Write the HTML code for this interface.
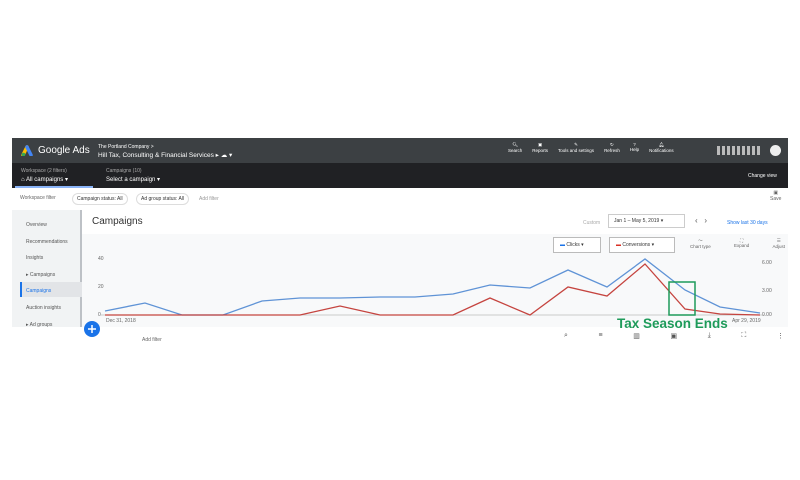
<!DOCTYPE html><html><head><style>
body{margin:0;width:800px;height:480px;background:#fff;font-family:"Liberation Sans",sans-serif;position:relative;overflow:hidden}
.a{position:absolute}
.t{font-size:5px;color:#fff}
.g{color:#666;font-size:5px}
</style></head><body>
<div class="a" style="left:12px;top:138px;width:776px;height:204px;overflow:hidden;background:#fff">
<div class="a" style="left:0;top:0;width:776px;height:25px;background:#3c4043"></div>
<svg class="a" style="left:9px;top:7px" width="12" height="11"><path d="M2 10 L6 2" stroke="#fbbc04" stroke-width="3.5" stroke-linecap="round"/><path d="M6 2 L10 10" stroke="#4285f4" stroke-width="3.5" stroke-linecap="round"/><circle cx="2.5" cy="9.5" r="1.8" fill="#34a853"/></svg>
<div class="a" style="left:26px;top:7px;font-size:10px;color:#fff">Google Ads</div>
<div class="a t" style="left:86px;top:6px">The Portland Company &gt;</div>
<div class="a" style="left:86px;top:13px;font-size:6.5px;color:#fff">Hill Tax, Consulting &amp; Financial Services ▸ ☁ ▾</div>
<div class="a t" style="left:496px;top:4px;width:240px;display:flex;gap:10px;text-align:center;font-size:4.5px">
<span>🔍︎<br>Search</span><span>▣<br>Reports</span><span>✎<br>Tools and settings</span><span>↻<br>Refresh</span><span>?<br>Help</span><span>🔔︎<br>Notifications</span></div>
<div class="a" style="left:705px;top:8px;width:45px;height:9px;background:repeating-linear-gradient(90deg,#bbb 0 3px,#3c4043 3px 5px)"></div>
<div class="a" style="left:758px;top:7px;width:11px;height:11px;border-radius:50%;background:#eee"></div>
<div class="a" style="left:0;top:25px;width:776px;height:25px;background:#202124"></div>
<div class="a g" style="left:9px;top:30px;color:#aaa">Workspace (2 filters)</div>
<div class="a t" style="left:9px;top:38px;font-size:6px">⌂ All campaigns ▾</div>
<div class="a" style="left:3px;top:48px;width:78px;height:2px;background:#8ab4f8"></div>
<div class="a g" style="left:94px;top:30px;color:#aaa">Campaigns (10)</div>
<div class="a t" style="left:94px;top:38px;font-size:6px">Select a campaign ▾</div>
<div class="a t" style="left:736px;top:35px">Change view</div>
<div class="a g" style="left:8px;top:57px">Workspace filter</div>
<div class="a g" style="left:60px;top:55px;border:1px solid #ddd;border-radius:8px;padding:2px 4px;color:#333">Campaign status: All</div>
<div class="a g" style="left:124px;top:55px;border:1px solid #ddd;border-radius:8px;padding:2px 4px;color:#333">Ad group status: All</div>
<div class="a g" style="left:187px;top:58px;color:#999">Add filter</div>
<div class="a g" style="left:758px;top:52px;text-align:center">▣<br>Save</div>
<div class="a" style="left:0;top:72px;width:68px;height:132px;background:#f1f3f4"></div>
<div class="a" style="left:68px;top:72px;width:2px;height:132px;background:#bdc1c6"></div>
<div class="a" style="left:8px;top:144px;width:60px;height:15px;background:#e2e4e7;border-left:2px solid #1a73e8"></div>
<div class="a g" style="left:14px;top:79px;line-height:16.6px;color:#555">Overview<br>Recommendations<br>Insights<br>▸ Campaigns<br><span style="color:#1a73e8">Campaigns</span><br>Auction insights<br>▸ Ad groups<br>▸ Ads &amp; assets</div>
<div class="a" style="left:70px;top:72px;width:706px;height:24px;background:#fff;border-bottom:1px solid #ccc"></div>
<div class="a" style="left:80px;top:78px;font-size:10px;color:#333">Campaigns</div>
<div class="a g" style="left:571px;top:82px;color:#aaa">Custom</div>
<div class="a g" style="left:596px;top:76px;border:1px solid #ccc;padding:3px 5px;color:#333;width:65px">Jan 1 – May 5, 2019 ▾</div>
<div class="a" style="left:683px;top:78px;font-size:8px;color:#555">‹ &nbsp; ›</div>
<div class="a" style="left:715px;top:82px;font-size:5px;color:#1a73e8">Show last 30 days</div>
<div class="a" style="left:70px;top:96px;width:706px;height:93px;background:#f8f9fa"></div>
<div class="a g" style="left:541px;top:99px;width:46px;height:14px;border:1px solid #bbb;background:#fff;line-height:14px;text-indent:6px;color:#333"><span style="color:#1a73e8">▬</span> Clicks ▾</div>
<div class="a g" style="left:597px;top:99px;width:64px;height:14px;border:1px solid #bbb;background:#fff;line-height:14px;text-indent:6px;color:#333"><span style="color:#d93025">▬</span> Conversions ▾</div>
<div class="a g" style="left:678px;top:100px;width:95px;display:flex;justify-content:space-between;text-align:center;font-size:4.5px"><span>〜<br>Chart type</span><span>⛶<br>Expand</span><span>☰<br>Adjust</span></div>
<div class="a g" style="left:86px;top:118px">40</div><div class="a g" style="left:86px;top:146px">20</div><div class="a g" style="left:86px;top:174px">0</div>
<div class="a g" style="left:750px;top:122px">6.00</div><div class="a g" style="left:750px;top:150px">3.00</div><div class="a g" style="left:750px;top:174px">0.00</div>
<div class="a g" style="left:94px;top:180px">Dec 31, 2018</div><div class="a g" style="left:720px;top:180px">Apr 29, 2019</div>
<div class="a" style="left:0;top:189px;width:776px;height:15px;background:#fff"></div>
<div class="a g" style="left:552px;top:194px;width:220px;font-size:7px;display:flex;justify-content:space-between;color:#555"><span>⌕</span><span>≡</span><span>▥</span><span>▣</span><span>⤓</span><span>⛶</span><span>⋮</span></div>
<div class="a g" style="left:130px;top:199px">Add filter</div>
</div>
<svg class="a" style="left:0;top:0" width="800" height="480">
<line x1="100" y1="315" x2="765" y2="315" stroke="#bbb" stroke-width=".7"/>
<polyline fill="none" stroke="#5f93d6" stroke-width="1.3" points="105,311 145,303 182,315 223,315 262,301 300,298 340,298 380,297 415,297 453,294 490,285 530,288 568,270 607,287 645,259 685,290 720,307 760,313"/>
<polyline fill="none" stroke="#c5443f" stroke-width="1.3" points="105,315 300,315 340,306 380,315 453,315 490,298 530,315 568,287 607,296 645,264 685,309 720,314 760,315"/>
<rect x="669" y="282" width="26" height="33" fill="none" stroke="#1e9b5a" stroke-width="1.5"/>
<circle cx="92" cy="329" r="8" fill="#1a73e8"/><path d="M88 329h8M92 325v8" stroke="#fff" stroke-width="1.5"/>
</svg>
<div class="a" style="left:617px;top:316px;font-size:13.5px;font-weight:bold;color:#1e9b5a">Tax Season Ends</div>
</body></html>
